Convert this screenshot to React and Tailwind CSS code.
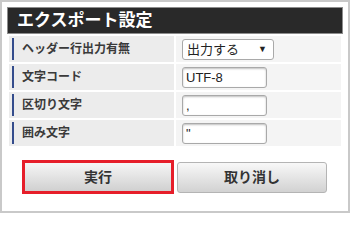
import React from "react";

const rows = [
  { label: "ヘッダー行出力有無", type: "select", value: "出力する" },
  { label: "文字コード", type: "input", value: "UTF-8" },
  { label: "区切り文字", type: "input", value: "," },
  { label: "囲み文字", type: "input", value: "\"" },
];

const font = { fontFamily: '"Liberation Sans", "Noto Sans CJK JP", sans-serif' };

const App = () => {
  return (
    <div className="w-[353px] h-[218px] bg-white" style={font}>
      <div className="w-[350px] h-[213px] border-2 border-[#c9c9c9] bg-white p-[5px]">
        <div className="h-[27px] bg-[#292929] border border-[#8c8c8c] flex items-center pl-[9px] text-white font-bold text-[17px] leading-none">
          エクスポート設定
        </div>

        <div className="mt-[2px] px-[2px] flex flex-col gap-[2px]">
          {rows.map((row) => (
            <div key={row.label} className="flex gap-[2px] h-[26px]">
              <div className="w-[165px] bg-[#ececec] flex items-center">
                <div className="ml-[3px] w-[2px] h-[22px] bg-[#344c8c]" />
                <span className="ml-[8px] text-[12px] font-bold text-[#3a3a3a] leading-none">{row.label}</span>
              </div>
              <div className="flex-1 bg-[#f4f4f4] flex items-center pl-[6px]">
                {row.type === "select" ? (
                  <div className="w-[92px] h-[21px] bg-white border border-[#a9a9a9] rounded-[3px] flex items-center justify-between pl-[4px] pr-[6px] text-[13px] text-[#222]">
                    <span className="leading-none">{row.value}</span>
                    <span className="text-[9px] leading-none">▼</span>
                  </div>
                ) : (
                  <input
                    readOnly
                    value={row.value}
                    className="w-[85px] h-[21px] bg-white border border-[#a9a9a9] rounded-[3px] px-[3px] text-[13px] text-[#222] shadow-[inset_0_1px_2px_rgba(0,0,0,0.25)] outline-none"
                  />
                )}
              </div>
            </div>
          ))}
        </div>

        <div className="mt-[14px] pl-[15px] flex items-center gap-[3px]">
          <div className="w-[152px] h-[34px] border-[3px] border-[#e61e2a]">
            <button className="w-full h-full bg-gradient-to-b from-[#f6f6f6] to-[#d0d0d0] text-[14px] font-bold text-[#333]">
              実行
            </button>
          </div>
          <button className="w-[150px] h-[31px] rounded-[3px] border border-[#b4b4b4] bg-gradient-to-b from-[#f8f8f8] to-[#d2d2d2] text-[14px] font-bold text-[#333]">
            取り消し
          </button>
        </div>
      </div>
    </div>
  );
};

export default App;
